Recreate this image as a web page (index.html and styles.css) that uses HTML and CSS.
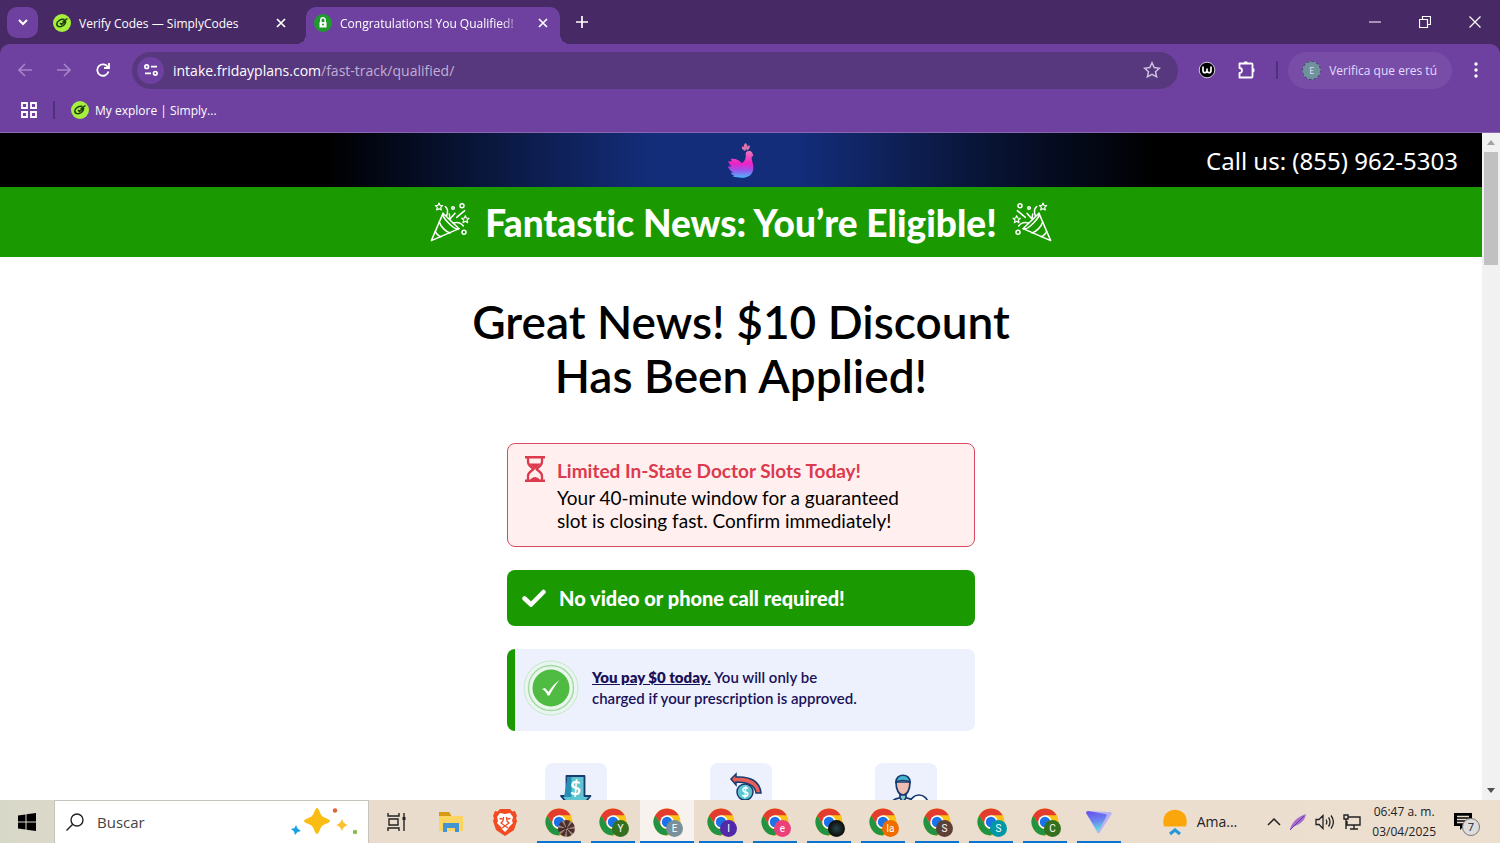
FILE: index.html
```
<!DOCTYPE html>
<html lang="es">
<head>
<meta charset="UTF-8">
<meta name="viewport" content="width=device-width, initial-scale=1.0">
<title>Congratulations! You Qualified!</title>
<link rel="stylesheet" href="styles.css">
</head>
<body>
<svg class="defs" aria-hidden="true">
    <symbol id="simply" viewBox="0 0 18 18">
        <circle cx="9" cy="9" r="9" fill="#a6ef3d"/>
        <path d="M11.500 5.500C8 4.700 3.800 7 3.800 10c0 3 4 3.500 6.500 1.500 1.700-1.500 2.700-3 2.200-4.500L8.500 10.500 7 9M9.500 8l5-3.500" fill="none" stroke="#1c3d12" stroke-width="1.500"/>
    </symbol>
    <symbol id="close" viewBox="0 0 10 10">
        <path d="M1 1l8 8M9 1L1 9" fill="none" stroke="currentColor" stroke-width="1.700"/>
    </symbol>
    <symbol id="chrome" viewBox="0 0 28 28">
        <circle cx="14" cy="14" r="13.500" fill="#fbc116"/>
        <path d="M2.300 7.250A13.500 13.500 0 0 1 25.700 7.250H14L8.100 17.400z" fill="#e33b2e"/>
        <path d="M2.300 7.250A13.500 13.500 0 0 0 14 27.500L19.900 17.400A6.700 6.700 0 0 1 8.100 17.400z" fill="#229342"/>
        <circle cx="14" cy="14" r="6.800" fill="#fff"/>
        <circle cx="14" cy="14" r="5.200" fill="#1a73e8"/>
    </symbol>
    <symbol id="popper" viewBox="36 36 120 120">
        <g fill="none" stroke="#fff" stroke-width="4.500" stroke-linejoin="round" stroke-linecap="round">
            <path d="M75 70L40 152l83-36z"/>
            <path d="M75 70c-8 8 36 54 48 46M64 96c4 14 18 28 32 33M52 124c3 8 10 14 17 16"/>
            <path d="M82 50c8 6 8 16 4 27M94 72l2 15 15-17M116 82l24-20M106 99c12-4 22-2 30 9"/>
            <path d="M63 39l3 7 8 1-6 5 2 8-7-4-7 4 2-8-6-5 8-1zM142 77l3 7 8 1-6 5 2 8-7-4-7 4 2-8-6-5 8-1z" stroke-width="3.500"/>
            <circle cx="105" cy="54" r="4"/>
            <circle cx="132" cy="47" r="6"/>
            <circle cx="138" cy="127" r="6"/>
        </g>
    </symbol>
    <symbol id="tick" viewBox="0 0 24 18">
        <path d="M2.500 9.500L9 15.500 21.500 3" fill="none" stroke="#fff" stroke-width="4.500" stroke-linecap="round"/>
    </symbol>
</svg>

<header class="browser">
    <div class="tabs">
        <button class="tab-search" aria-label="Buscar pestañas"><svg width="10" height="7" viewBox="0 0 10 7"><path d="M1 1l4 4 4-4" fill="none" stroke="#fff" stroke-width="2"/></svg></button>
        <div class="tab">
            <svg class="favicon"><use href="#simply"/></svg>
            <span class="tab-title">Verify Codes — SimplyCodes</span>
            <button class="tab-close" aria-label="Cerrar"><svg width="10" height="10"><use href="#close"/></svg></button>
        </div>
        <div class="tab active">
            <svg class="favicon" viewBox="0 0 18 18"><circle cx="9" cy="9" r="9" fill="#1f9a2e"/><path d="M5.500 8h7v5.500h-7z" fill="#fff"/><path d="M6.800 8V6a2.200 2.200 0 0 1 4.400 0v2" fill="none" stroke="#fff" stroke-width="1.500"/><circle cx="9" cy="10.500" r="1" fill="#1f9a2e"/></svg>
            <span class="tab-title">Congratulations! You Qualified!</span>
            <button class="tab-close" aria-label="Cerrar"><svg width="10" height="10"><use href="#close"/></svg></button>
        </div>
        <button class="new-tab" aria-label="Nueva pestaña"><svg width="12" height="12" viewBox="0 0 12 12"><path d="M6 0v12M0 6h12" stroke="#fff" stroke-width="1.700"/></svg></button>
        <div class="window-controls">
            <button aria-label="Minimizar"><svg width="12" height="12" viewBox="0 0 12 12"><path d="M0 6h12" stroke="#fff"/></svg></button>
            <button aria-label="Restaurar"><svg width="12" height="12" viewBox="0 0 12 12"><path d="M.5 3.500h8v8h-8zM3.500 3V.5h8v8H9" fill="none" stroke="#fff" stroke-width="1.200"/></svg></button>
            <button aria-label="Cerrar ventana"><svg width="12" height="12" viewBox="0 0 12 12"><path d="M.5.5l11 11M11.500.5l-11 11" stroke="#fff" stroke-width="1.200"/></svg></button>
        </div>
    </div>

    <div class="toolbar">
        <button class="nav dim" aria-label="Atrás"><svg width="14" height="14" viewBox="0 0 14 14"><path d="M14 7H1M7 1L1 7l6 6" fill="none" stroke="currentColor" stroke-width="1.600"/></svg></button>
        <button class="nav dim" aria-label="Adelante"><svg width="14" height="14" viewBox="0 0 14 14"><path d="M0 7h13M7 1l6 6-6 6" fill="none" stroke="currentColor" stroke-width="1.600"/></svg></button>
        <button class="nav" aria-label="Recargar"><svg width="14" height="14" viewBox="0 0 14 14"><path d="M12.500 8.500A5.700 5.700 0 1 1 12 4.300M13 0v5H8" fill="none" stroke="currentColor" stroke-width="1.800"/></svg></button>
        <div class="address">
            <button class="site-info" aria-label="Información del sitio"><svg width="14" height="12" viewBox="0 0 14 12"><g fill="none" stroke="#fff" stroke-width="1.700"><circle cx="2.700" cy="2.700" r="1.800"/><path d="M7 2.700h6M1 9.300h6"/><circle cx="11.300" cy="9.300" r="1.800"/></g></svg></button>
            <a class="url" href="#">intake.fridayplans.com<span>/fast-track/qualified/</span></a>
            <button class="star" aria-label="Favorito"><svg width="18" height="18" viewBox="0 0 18 18"><path d="M9 1.800l2.200 4.800 5.200.6-3.900 3.500 1.100 5.200L9 13.300l-4.600 2.600 1.100-5.200L1.600 7.200l5.200-.6z" fill="none" stroke="#cfc0e2" stroke-width="1.500"/></svg></button>
        </div>
        <button class="ext" aria-label="Extensión"><svg width="18" height="18" viewBox="0 0 18 18"><circle cx="9" cy="9" r="7.800" fill="#000" stroke="#cfc9d6"/><path d="M5 5.500v4.300c0 3 4 2 4 0V7.500v2.300c0 2 4 3 4 0V5.500" fill="none" stroke="#fff" stroke-width="1.700"/></svg></button>
        <button class="ext" aria-label="Extensiones"><svg width="20" height="20" viewBox="0 0 20 20"><path d="M2.500 3.500h12a1 1 0 0 1 1 1v12a1 1 0 0 1-1 1h-12v-4.500a2.500 2.500 0 0 0 0-5z" fill="none" stroke="#fff" stroke-width="1.800" stroke-linejoin="round"/><path d="M6.500 3.500a2.200 2.200 0 0 1 4.400 0zM15.500 8a2.200 2.200 0 0 1 0 4.400z" fill="#fff"/></svg></button>
        <span class="divider"></span>
        <button class="profile"><span class="avatar">E</span>Verifica que eres tú</button>
        <button class="menu" aria-label="Menú"><svg width="4" height="16" viewBox="0 0 4 16" fill="#fff"><circle cx="2" cy="2" r="1.700"/><circle cx="2" cy="8" r="1.700"/><circle cx="2" cy="14" r="1.700"/></svg></button>
    </div>

    <nav class="bookmarks">
        <button aria-label="Aplicaciones"><svg width="16" height="16" viewBox="0 0 16 16"><path d="M1 1h5v5H1zM10 1h5v5h-5zM1 10h5v5H1zM10 10h5v5h-5z" fill="none" stroke="#fff" stroke-width="1.800"/></svg></button>
        <span class="divider"></span>
        <a href="#"><svg class="favicon"><use href="#simply"/></svg>My explore | Simply...</a>
    </nav>
</header>

<div class="viewport">
    <main class="page">
        <div class="site-header">
            <svg class="logo" viewBox="84 24 84 114">
                <defs><linearGradient id="bird" x1="0" y1="0" x2="0" y2="1"><stop offset="0" stop-color="#e879b8"/><stop offset=".45" stop-color="#f31fc4"/><stop offset=".7" stop-color="#a050e8"/><stop offset="1" stop-color="#48b8ff"/></linearGradient></defs>
                <path d="M140 60c4-8 17-8 20 0l3 8-5 4c-1 11 6 20 5 34-1 16-10 26-28 28-10 1-22 0-34-4l6-3c-6 0-10-4-12-8h7c-7-5-14-12-15-20 4 2 7 2 10 1-5-5-9-10-9-16 4 2 8 2 11 0-2-2-4-4-3-6 14-2 24 4 32 12 9-3 14-14 12-30z" fill="url(#bird)"/>
                <path d="M139 54c-9-3-13-9-9-14 7 1 10 6 9 14zm2-3c-9-9-7-18-1-21 7 6 7 13 1 21zm2 2c0-10 4-16 9-16 2 7-2 13-9 16z" fill="#dc74ae"/>
            </svg>
            <a class="call" href="tel:8559625303">Call us: (855) 962-5303</a>
        </div>
        <div class="banner">
            <svg class="popper"><use href="#popper"/></svg>
            <h2>Fantastic News: You’re Eligible!</h2>
            <svg class="popper flip"><use href="#popper"/></svg>
        </div>
        <h1>Great News! $10 Discount<br>Has Been Applied!</h1>
        <div class="cards">
            <section class="card slots">
                <svg width="20" height="26" viewBox="0 0 20 26"><path d="M0 1.300h20M0 24.700h20" stroke="#dc3a4e" stroke-width="2.600"/><path d="M3 2v4c0 4 4 5 5.500 7C7 15 3 16 3 20v4M17 2v4c0 4-4 5-5.500 7 1.500 2 5.500 3 5.500 7v4" fill="none" stroke="#dc3a4e" stroke-width="2.300"/><path d="M4 7.500h12L10 13zM5 24c1-2 4-3 5-3s4 1 5 3z" fill="#dc3a4e"/></svg>
                <div>
                    <h3>Limited In-State Doctor Slots Today!</h3>
                    <p>Your 40-minute window for a guaranteed<br>slot is closing fast. Confirm immediately!</p>
                </div>
            </section>
            <section class="card no-call">
                <svg width="24" height="18"><use href="#tick"/></svg>
                <strong>No video or phone call required!</strong>
            </section>
            <section class="card pay">
                <svg width="56" height="56" viewBox="0 0 56 56"><circle cx="28" cy="28" r="27" fill="#eaf5f1" stroke="#c4e8c9"/><circle cx="28" cy="28" r="22.500" fill="#e9f5ed" stroke="#a4dba2" stroke-width="1.400"/><circle cx="28" cy="28" r="18.500" fill="#4fbb42"/><path d="M19 29l3-1 3.500 4c3-5 6-8.500 11-12-4 5-7 9.500-10 15.500h-2c-1-3-2.500-5-5.500-6.500z" fill="#fff"/></svg>
                <p><a href="#">You pay $0 today.</a> You will only be<br>charged if your prescription is approved.</p>
            </section>
        </div>
        <div class="features">
            <div class="tile"><svg width="62" height="62" viewBox="0 0 62 62"><path d="M21.500 13h18v20h6L31 50 16 33h5.500z" fill="#5cc5d0" stroke="#183b70" stroke-width="1.800" stroke-linejoin="round"/><path d="M22.500 14h4v20H19z" fill="#278eb4"/><text x="30.500" y="32" text-anchor="middle">$</text></svg></div>
            <div class="tile"><svg width="62" height="62" viewBox="0 0 62 62"><path d="M21 16l5-5v3c15-1 24 5 25 16h-5c-1-8-8-11-20-11v3z" fill="#e85e59" stroke="#183b70" stroke-width="1.500"/><circle cx="35" cy="29" r="8" fill="#5cc5d0" stroke="#183b70" stroke-width="1.500"/><text class="coin" x="35" y="34" text-anchor="middle">$</text></svg></div>
            <div class="tile"><svg width="62" height="62" viewBox="0 0 62 62"><g stroke="#183b70" stroke-width="1.700"><path d="M16 48V41c2-6 7-5 12-7 5 2 10 1 12 7v7z" fill="#fff"/><path d="M25 29h6v6l-3 4-3-4z" fill="#8cc9d5"/><path d="M21 19c0 8 3 13 7 13s7-5 7-13z" fill="#efbdb1"/><path d="M21 19c0-9 14-9 14 0-4-2-10-2-14 0z" fill="#42b6cc"/><circle cx="44" cy="41" r="9" fill="#fff"/></g></svg></div>
        </div>
    </main>
    <div class="scrollbar">
        <button aria-label="Subir"><svg width="8" height="5" viewBox="0 0 8 5"><path d="M4 0l4 5H0z" fill="#a3a3a3"/></svg></button>
        <div class="thumb"></div>
        <button aria-label="Bajar"><svg width="8" height="5" viewBox="0 0 8 5"><path d="M4 5l4-5H0z" fill="#505050"/></svg></button>
    </div>
</div>

<footer class="taskbar">
    <button class="start" aria-label="Inicio"><svg width="18" height="18" viewBox="0 0 18 18"><path d="M0 2.500L7.500 1.400v7.100H0zM8.500 1.300L18 0v8.500H8.500zM0 9.500h7.500v7.100L0 15.500zM8.500 9.500H18V18l-9.500-1.300z"/></svg></button>
    <label class="search">
        <svg width="18" height="18" viewBox="0 0 18 18"><circle cx="11" cy="7" r="6" fill="none" stroke="#222" stroke-width="1.400"/><path d="M7 11l-6.500 6.500" stroke="#222" stroke-width="1.400"/></svg>
        <input type="text" placeholder="Buscar" aria-label="Buscar">
        <svg width="68" height="28" viewBox="0 0 68 28"><path d="M27 0c2 0 3 6 5 8s8 3 8 5-6 3-8 5-3 8-5 8-3-6-5-8-8-3-8-5 6-3 8-5 3-8 5-8z" fill="#fbbc14"/><path d="M52 11c1.500 3.500 2 4.500 6 6-4 1.500-4.500 2.500-6 6-1.500-3.500-2-4.500-6-6 4-1.500 4.500-2.500 6-6z" fill="#fbbf32"/><path d="M6 17l1.500 3.500L11 23l-3.500 1L5 27l-1-3.500L1 21l3.500-1z" fill="#18a1e5"/><circle cx="45" cy="2.500" r="2.200" fill="#df6334"/><circle cx="65" cy="24" r="2.200" fill="#87bf55"/></svg>
    </label>
    <div class="apps">
        <button class="app" aria-label="Vista de tareas"><svg width="20" height="18" viewBox="0 0 20 18"><path d="M1 0v3h11V0M1 18v-3h11v3M2 6h9v6H2zM17 0v18" fill="none" stroke="#222" stroke-width="1.400"/><path d="M15.500 4h3v3h-3z" fill="#222"/></svg></button>
        <button class="app" aria-label="Explorador"><svg width="24" height="22" viewBox="0 0 24 22"><path d="M0 1h10l2 3v5H0z" fill="#d79b13"/><path d="M0 5h24v15H0z" fill="#fcd462"/><path d="M4 21v-9h16v9h-4v-4H8v4z" fill="#4295d1"/></svg></button>
        <button class="app" aria-label="Brave"><svg width="24" height="28" viewBox="0 0 24 28"><path d="M7 1h10l2.500 2.500L22 3l2 5-1 2 1 3-3 9-9 6-9-6L0 13l1-3-1-2 2-5 2.500.5z" fill="#f24a22"/><path d="M12 6l5-1 3 4-1 4 1 2-4 4-1 2-3 3-3-3-1-2-4-4 1-2-1-4 3-4z" fill="#fff"/><path d="M6.500 10.500l3 .5M17.500 10.500l-3 .5M10.500 9l-.500 4-2 2 4 3 4-3-2-2-.5-4M9 20l3-2 3 2" fill="none" stroke="#f24a22" stroke-width="1.300"/></svg></button>
        <button class="app open"><svg class="chrome"><use href="#chrome"/></svg><span class="badge photo"></span></button>
        <button class="app open"><svg class="chrome"><use href="#chrome"/></svg><span class="badge green">Y</span></button>
        <button class="app open current"><svg class="chrome"><use href="#chrome"/></svg><span class="badge slate">E</span></button>
        <button class="app open"><svg class="chrome"><use href="#chrome"/></svg><span class="badge violet">I</span></button>
        <button class="app open"><svg class="chrome"><use href="#chrome"/></svg><span class="badge pink">e</span></button>
        <button class="app open"><svg class="chrome"><use href="#chrome"/></svg><span class="badge dark"></span></button>
        <button class="app open"><svg class="chrome"><use href="#chrome"/></svg><span class="badge orange">la</span></button>
        <button class="app open"><svg class="chrome"><use href="#chrome"/></svg><span class="badge brown">S</span></button>
        <button class="app open"><svg class="chrome"><use href="#chrome"/></svg><span class="badge teal">S</span></button>
        <button class="app open"><svg class="chrome"><use href="#chrome"/></svg><span class="badge green">C</span></button>
        <button class="app open" aria-label="VPN"><svg width="26" height="24" viewBox="0 0 26 24"><defs><linearGradient id="vpn" x1=".3" y1="0" x2=".5" y2="1"><stop offset="0" stop-color="#6852ed"/><stop offset=".5" stop-color="#6b86f0"/><stop offset="1" stop-color="#59edda"/></linearGradient></defs><path d="M2 1l22 1c2 0 2 2 1 3L14 22c-1 2-3 1-3 0L0 3c0-1 1-2 2-2z" fill="#b7b2f3"/><path d="M2 1l17 3c2 0 2 2 1 3l-8 15L0 3c0-1 1-2 2-2z" fill="url(#vpn)"/></svg></button>
    </div>
    <div class="tray">
        <button class="weather"><svg width="28" height="28" viewBox="0 0 28 28"><path d="M3 18.500C-3-4 31-4 25 18.500z" fill="#fba70c"/><path d="M9 26l5-4 5 4" fill="none" stroke="#2498d8" stroke-width="3"/></svg>Ama...</button>
        <button aria-label="Mostrar ocultos"><svg width="14" height="8" viewBox="0 0 14 8"><path d="M1 7l6-6 6 6" fill="none" stroke="#222" stroke-width="1.500"/></svg></button>
        <button aria-label="Pluma"><svg width="18" height="18" viewBox="0 0 18 18"><path d="M1 17C2 10 8 4 17 1c-1 7-6 10-13 13z" fill="#a66cd0"/><path d="M1 17L15 3" stroke="#6b3a9c"/></svg></button>
        <button aria-label="Volumen"><svg width="20" height="16" viewBox="0 0 20 16"><path d="M1 5.500h3l4-4v13l-4-4H1zM11 5.500c1 1.500 1 3.500 0 5M13.500 3.500c2 2.500 2 6.500 0 9M16 1.500c3 4 3 9 0 13" fill="none" stroke="#222" stroke-width="1.300"/></svg></button>
        <button aria-label="Red"><svg width="18" height="16" viewBox="0 0 18 16"><path d="M5 3h12v8H4V7M11 11v4M7 15h8M1 1h4v4H1zM3 5v10" fill="none" stroke="#222" stroke-width="1.400"/></svg></button>
        <div class="clock"><time>06:47 a. m.</time><time>03/04/2025</time></div>
        <button class="notes" aria-label="Notificaciones"><svg width="18" height="18" viewBox="0 0 18 18"><path d="M0 0h18v13h-8l-4 4v-4H0z"/><path d="M3 3.500h12M3 6.500h12M3 9.500h9" stroke="#e9dccd" stroke-width="1.300"/></svg><span>7</span></button>
    </div>
</footer>
</body>
</html>
```

FILE: styles.css
```
* {
    box-sizing: border-box;
}

body {
    margin: 0;
    height: 100vh;
    display: flex;
    flex-direction: column;
    overflow: hidden;
    font-family: "Open Sans", sans-serif;
    font-size: 13px;
}

button {
    display: flex;
    align-items: center;
    justify-content: center;
    padding: 0;
    border: 0;
    background: none;
    color: inherit;
    font: inherit;
}

a {
    color: inherit;
    text-decoration: none;
}

svg {
    flex: none;
}

.defs {
    position: absolute;
    width: 0;
    height: 0;
}

/* browser */
.browser {
    background: #472a65;
    color: #fff;
}

.tabs {
    display: flex;
    align-items: flex-end;
    height: 44px;
}

.tab-search {
    width: 31px;
    height: 31px;
    margin: 0 7px 6px 7px;
    border-radius: 10px;
    background: #6e41a1;
}

.favicon {
    width: 18px;
    height: 18px;
}

.tab {
    display: flex;
    align-items: center;
    gap: 8px;
    height: 37px;
    width: 254px;
    padding: 0 12px 5px 8px;
    font-size: 12px;
    font-weight: 500;
}

.tab:first-of-type {
    width: 261px;
    padding-right: 20px;
}

.tab.active {
    position: relative;
    background: #6e41a1;
    border-radius: 10px 10px 0 0;
}

.tab.active::before,
.tab.active::after {
    content: "";
    position: absolute;
    bottom: 0;
    width: 10px;
    height: 10px;
}

.tab.active::before {
    right: 100%;
    background: radial-gradient(circle at 0 0, transparent 10px, #6e41a1 10px);
}

.tab.active::after {
    left: 100%;
    background: radial-gradient(circle at 100% 0, transparent 10px, #6e41a1 10px);
}

.tab-title {
    flex: 1;
    overflow: hidden;
    white-space: nowrap;
}

.active .tab-title {
    margin-right: 7px;
    -webkit-mask-image: linear-gradient(90deg, #000 88%, transparent);
    mask-image: linear-gradient(90deg, #000 88%, transparent);
}

.new-tab {
    width: 28px;
    height: 28px;
    margin: 0 0 8px 8px;
}

.window-controls {
    display: flex;
    margin-left: auto;
    height: 44px;
}

.window-controls button {
    width: 50px;
}

.toolbar {
    display: flex;
    align-items: center;
    height: 52px;
    padding: 0 22px 0 5px;
    background: #6e41a1;
    border-radius: 10px 10px 0 0;
}

.nav {
    width: 39px;
    height: 36px;
}

.dim {
    color: #a584c8;
}

.address {
    flex: 1;
    display: flex;
    align-items: center;
    height: 37px;
    margin: 0 18px 0 10px;
    padding: 0 17px 0 5px;
    border-radius: 19px;
    background: #57377d;
}

.site-info {
    width: 27px;
    height: 27px;
    margin-right: 9px;
    border-radius: 50%;
    background: #6e41a1;
}

.url {
    flex: 1;
    font-size: 14px;
    font-weight: 500;
}

.url span {
    color: #c0afd4;
}

.ext {
    width: 22px;
    margin-right: 18px;
}

.divider {
    width: 2px;
    height: 18px;
    background: #51307a;
}

.profile {
    height: 37px;
    margin: 0 22px 0 10px;
    padding: 0 15px 0 14px;
    gap: 8px;
    border-radius: 19px;
    background: #784da8;
    color: #e3dcff;
    font-size: 12px;
    font-weight: 500;
}

.avatar {
    width: 19px;
    height: 19px;
    border: 1px dashed #4b3b82;
    border-radius: 50%;
    background: #6f929b;
    font-size: 9px;
    line-height: 17px;
}

.bookmarks {
    display: flex;
    align-items: center;
    gap: 16px;
    height: 37px;
    padding: 0 21px 8px;
    background: #6e41a1;
    border-bottom: 1px solid #8a68b1;
    font-size: 12px;
    font-weight: 500;
}

.bookmarks a {
    display: flex;
    align-items: center;
    gap: 6px;
}

/* web page */
.viewport {
    flex: 1;
    display: flex;
    min-height: 0;
    background: #fff;
}

.page {
    flex: 1;
    overflow: hidden;
    font-family: Lato, sans-serif;
    font-variant-ligatures: none;
    color: #000;
}

.site-header {
    display: grid;
    grid-template-columns: 1fr auto 1fr;
    align-items: center;
    height: 54px;
    padding-right: 24px;
    background: linear-gradient(90deg, #000 22%, #091538 32%, #132d7a 44%, #132d7a 54%, #091538 66%, #000 78%);
}

.logo {
    grid-column: 2;
    width: 28px;
    height: 38px;
    margin-left: 24px;
}

.call {
    justify-self: end;
    color: #fff;
    font: 24px "Noto Sans", sans-serif;
}

.banner {
    display: flex;
    align-items: center;
    justify-content: center;
    gap: 15px;
    height: 70px;
    background: #1a9900;
    color: #fff;
}

.banner h2 {
    margin: 0;
    font-size: 37px;
    font-weight: 900;
}

.popper {
    width: 40px;
    height: 40px;
}

.flip {
    transform: scaleX(-1);
}

h1 {
    margin: 38px 0 40px;
    font-size: 46px;
    font-weight: 600;
    line-height: 54px;
    text-align: center;
}

.cards {
    display: flex;
    flex-direction: column;
    gap: 23px;
    width: 468px;
    margin: 0 auto;
}

.card {
    display: flex;
    border-radius: 8px;
}

.card h3,
.card p {
    margin: 0;
}

.slots {
    gap: 12px;
    padding: 12px 17px 14px;
    border: 1px solid #d94a62;
    background: #fff0ef;
    font-size: 19px;
    line-height: 23px;
}

.card.slots h3 {
    margin: 3px 0 4px;
    color: #dc3a4e;
    font-size: 19px;
    font-weight: 700;
}

.no-call {
    align-items: center;
    gap: 13px;
    height: 56px;
    padding: 0 15px;
    background: #1a9900;
    color: #fff;
    font-size: 20px;
}

.no-call strong {
    font-weight: 900;
}

.pay {
    gap: 13px;
    height: 82px;
    padding: 11px 8px;
    border-left: 8px solid #1a9900;
    background: #edf1fe;
    color: #1a1258;
    font-size: 15px;
    font-weight: 600;
    line-height: 21px;
}

.pay p {
    padding-top: 7px;
}

.pay a {
    font-weight: 800;
    text-decoration: underline;
}

.features {
    display: grid;
    grid-template-columns: repeat(3, 1fr);
    justify-items: center;
    width: 496px;
    margin: 32px auto 0;
}

.tile {
    width: 62px;
    height: 62px;
    border-radius: 8px;
    background: #edf1fe;
}

.tile text {
    fill: #fff;
    font-size: 19px;
    font-weight: 700;
}

.tile .coin {
    font-size: 13px;
}

.scrollbar {
    display: flex;
    flex-direction: column;
    width: 18px;
    background: #f1f1f1;
}

.scrollbar button {
    height: 19px;
}

.scrollbar button:last-child {
    margin-top: auto;
}

.thumb {
    height: 113px;
    margin: 0 2px;
    background: #c1c1c1;
}

/* taskbar */
.taskbar {
    display: flex;
    height: 43px;
    background: linear-gradient(90deg, #d8d8c9, #e9dccd 25%, #ecdfd0);
    color: #222;
}

.start {
    width: 54px;
}

.search {
    display: flex;
    align-items: center;
    width: 315px;
    padding: 0 10px 0 11px;
    border: 1px solid #c5c5bd;
    border-bottom: 0;
    background: #fff;
}

.search input {
    flex: 1;
    min-width: 0;
    padding: 0 0 0 13px;
    border: 0;
    font: 15px "Open Sans", sans-serif;
}

.search input::placeholder {
    color: #444;
}

.apps {
    display: flex;
    margin-left: 1px;
}

.app {
    position: relative;
    width: 54px;
}

.open::after {
    content: "";
    position: absolute;
    left: 5px;
    right: 5px;
    bottom: 0;
    height: 2px;
    background: #0b72cf;
}

.current {
    background: #f7f2ed;
}

.current::after {
    left: 0;
    right: 0;
}

.chrome {
    width: 28px;
    height: 28px;
}

.badge {
    position: absolute;
    left: 26px;
    top: 20px;
    width: 17px;
    height: 17px;
    border-radius: 50%;
    color: #fff;
    font: 10px/17px Roboto, sans-serif;
    text-align: center;
}

.photo {
    background: repeating-conic-gradient(#4a2d2b 0 20deg, #b09488 35deg, #3a2a2c 50deg);
}

.green {
    background: #34701e;
}

.slate {
    background: #78909c;
}

.violet {
    background: #5229a8;
}

.pink {
    background: #ec407a;
}

.dark {
    background: radial-gradient(#24464d, #111 60%);
}

.orange {
    background: #ef6c00;
}

.brown {
    background: #5d4037;
}

.teal {
    background: #0097a7;
}

.tray {
    display: flex;
    align-items: center;
    gap: 8px;
    margin-left: auto;
    padding-right: 18px;
}

.weather {
    gap: 8px;
    margin-right: 22px;
    font-size: 14px;
}

.clock {
    display: flex;
    flex-direction: column;
    align-items: center;
    margin-left: 3px;
    font-size: 12px;
    line-height: 20px;
}

.notes {
    position: relative;
    width: 28px;
    margin-left: 10px;
    justify-content: flex-start;
}

.notes span {
    position: absolute;
    left: 8px;
    top: 5px;
    width: 18px;
    height: 18px;
    border: 1px solid #777;
    border-radius: 50%;
    background: #ddd;
    font-size: 11px;
    line-height: 16px;
}
```
